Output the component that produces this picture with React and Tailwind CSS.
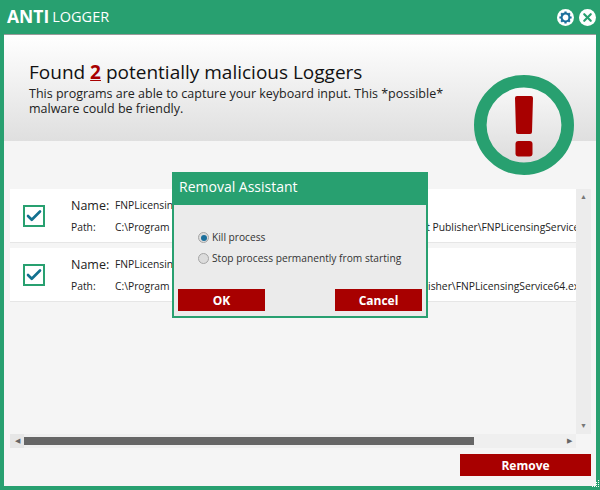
import React from 'react'
import { Check, X } from 'lucide-react'

const font = "font-['Open_Sans','Noto_Sans',sans-serif]"

const Gear = () => (
  <svg viewBox="0 0 20 20" className="w-[17px] h-[17px]">
    <circle cx="10" cy="10" r="10" fill="#fff" />
    <circle cx="10" cy="10" r="4.6" fill="none" stroke="#1b6f9c" strokeWidth="2.4" />
    <g stroke="#1b6f9c" strokeWidth="2.6">
      <path d="M10 2.8v3M10 14.2v3M2.8 10h3M14.2 10h3M4.9 4.9l2.1 2.1M13 13l2.1 2.1M15.1 4.9L13 7M7 13l-2.1 2.1" />
    </g>
  </svg>
)

const AlertBadge = () => (
  <svg viewBox="0 0 100 100" className="w-[100px] h-[100px]">
    <defs>
      <linearGradient id="ring" x1="0" y1="0" x2="0" y2="1">
        <stop offset="0" stopColor="#fafafa" />
        <stop offset="1" stopColor="#dadada" />
      </linearGradient>
    </defs>
    <circle cx="50" cy="50" r="43.7" fill="url(#ring)" stroke="#28a070" strokeWidth="12.6" />
    <path d="M41 23a2 2 0 0 1 2-2h14a2 2 0 0 1 2 2l-1 34a2 2 0 0 1-2 2h-12a2 2 0 0 1-2-2z" fill="#a80000" />
    <rect x="41.5" y="66" width="17" height="15.5" rx="3" fill="#a80000" />
  </svg>
)

const Row = ({ path }) => (
  <div className="h-[54px] shrink-0 bg-white border-b border-[#e6e6e6] flex items-center">
    <div className="w-[22px] h-[22px] ml-[13px] border-2 border-[#28a070] flex items-center justify-center shrink-0">
      <Check className="w-[18px] h-[18px] text-[#12718f]" strokeWidth={3.5} />
    </div>
    <div className="ml-[26px] mt-[3px] flex flex-col gap-[4px] whitespace-nowrap text-[#222]">
      <div className="flex items-center h-[18px]">
        <span className="w-[44px] text-[12.5px]">Name:</span>
        <span className="text-[10.3px]">FNPLicensingService</span>
      </div>
      <div className="flex items-center h-[18px]">
        <span className="w-[44px] text-[10.3px]">Path:</span>
        <span className="text-[10.3px]">{path}</span>
      </div>
    </div>
  </div>
)

const Radio = ({ checked, label }) => (
  <label className="flex items-center gap-[3px] h-[21px] text-[10.2px] text-[#333]">
    <span className="w-[11px] h-[11px] rounded-full border border-[#a5a5a5] bg-[#dcdcdc] flex items-center justify-center">
      {checked && <span className="w-[6px] h-[6px] rounded-full bg-[#1b6f9c]" />}
    </span>
    {label}
  </label>
)

const Button = ({ children, className }) => (
  <button className={`bg-[#a80000] text-white font-bold text-[12px] h-[22px] pt-[1px] ${className}`}>{children}</button>
)

const Watermark = ({ className, children }) => (
  <span className={`absolute -translate-x-1/2 -translate-y-1/2 -rotate-45 whitespace-nowrap pointer-events-none text-black/[0.025] font-bold ${className}`}>
    {children}
  </span>
)

export default function App() {
  return (
    <div className={`${font} relative w-[600px] h-[490px] overflow-hidden bg-[#28a070] flex flex-col`}>
      <header className="h-[34px] shrink-0 flex items-center text-white">
        <span className="ml-[7px] text-[17.5px] font-bold leading-none">ANTI</span>
        <span className="ml-[3px] text-[14.5px] leading-none">LOGGER</span>
        <div className="ml-auto mr-[4px] flex items-center gap-[5px]">
          <Gear />
          <span className="w-[17px] h-[17px] rounded-full bg-white flex items-center justify-center">
            <X className="w-[13px] h-[13px] text-[#28a070]" strokeWidth={4} />
          </span>
        </div>
      </header>

      <main className="flex-1 mx-[4px] mb-[4px] bg-[#f5f5f5] border-t border-[#9a9a9a] flex flex-col min-h-0">
        <section className="h-[106px] shrink-0 bg-gradient-to-b from-white to-[#dfdfdf] pl-[25px] pt-[24px] text-[#111]">
          <h1 className="text-[19px] leading-[27px]">
            Found <span className="font-bold text-[#a80000] underline">2</span> potentially malicious Loggers
          </h1>
          <p className="text-[12.5px] leading-[15px] w-[430px] text-[#222]">
            This programs are able to capture your keyboard input. This *possible* malware could be friendly.
          </p>
        </section>

        <section className="mt-[48px] ml-[6px] h-[259px] flex flex-col shrink-0">
          <div className="flex flex-1 min-h-0">
            <div className="flex-1 min-w-0 flex flex-col gap-[5px] overflow-hidden">
              <Row path="C:\Program Files (x86)\Common Files\Macrovision Shared\FlexNet Publisher\FNPLicensingService.exe" />
              <Row path="C:\Program Files\Common Files\Macrovision Shared\FlexNet Publisher\FNPLicensingService64.exe" />
            </div>
            <div className="w-[15px] mr-[5px] bg-[#ececec] flex flex-col items-center justify-between py-[3px] text-[7px] text-[#777]">
              <span>▲</span>
              <span>▼</span>
            </div>
          </div>
          <div className="h-[14px] mr-[20px] bg-[#efefef] flex items-center text-[7px] text-[#666]">
            <span className="w-[14px] h-full bg-[#e6e6e6] flex items-center justify-center">◀</span>
            <div className="w-[450px] h-[8px] bg-[#666]" />
            <span className="ml-auto mr-[4px]">▶</span>
          </div>
        </section>

        <div className="flex justify-end mt-[6px] mr-[5px]">
          <Button className="w-[131px]">Remove</Button>
        </div>
      </main>

      <div className="absolute left-[474px] top-[75px]">
        <AlertBadge />
      </div>

      <div className="absolute left-[172px] top-[172px] w-[256px] h-[146px] border-2 border-[#28a070] bg-[#ebebeb] flex flex-col">
        <div className="h-[31px] bg-[#28a070] text-white text-[14px] flex items-center pl-[5px] pb-[7px]">Removal Assistant</div>
        <div className="pl-[24px] pt-[22px] flex-1">
          <Radio checked label="Kill process" />
          <Radio label="Stop process permanently from starting" />
        </div>
        <div className="flex justify-between px-[4px] pb-[5px]">
          <Button className="w-[87px]">OK</Button>
          <Button className="w-[87px]">Cancel</Button>
        </div>
      </div>

      {/* resize grip */}
      <svg viewBox="0 0 9 9" className="absolute right-0 bottom-[2px] w-[9px] h-[9px]">
        <path d="M7 1h1v1H7zM5 3h1v1H5zM7 3h1v1H7zM3 5h1v1H3zM5 5h1v1H5zM7 5h1v1H7zM1 7h1v1H1zM3 7h1v1H3zM5 7h1v1H5zM7 7h1v1H7z" fill="#fff" />
      </svg>

      {/* site watermark */}
      <Watermark className="left-[93px] top-[95px] text-[18px] font-['Noto_Sans_CJK_SC',sans-serif]">多多软件站</Watermark>
      <Watermark className="left-[393px] top-[95px] text-[18px] font-['Noto_Sans_CJK_SC',sans-serif]">多多软件站</Watermark>
      <Watermark className="left-[93px] top-[395px] text-[18px] font-['Noto_Sans_CJK_SC',sans-serif]">多多软件站</Watermark>
      <Watermark className="left-[393px] top-[395px] text-[18px] font-['Noto_Sans_CJK_SC',sans-serif]">多多软件站</Watermark>
      <Watermark className="left-[172px] top-[139px] text-[21px]">www.ddooo.com</Watermark>
      <Watermark className="left-[472px] top-[139px] text-[21px]">www.ddooo.com</Watermark>
      <Watermark className="left-[172px] top-[439px] text-[21px]">www.ddooo.com</Watermark>
      <Watermark className="left-[472px] top-[439px] text-[21px]">www.ddooo.com</Watermark>
    </div>
  )
}
